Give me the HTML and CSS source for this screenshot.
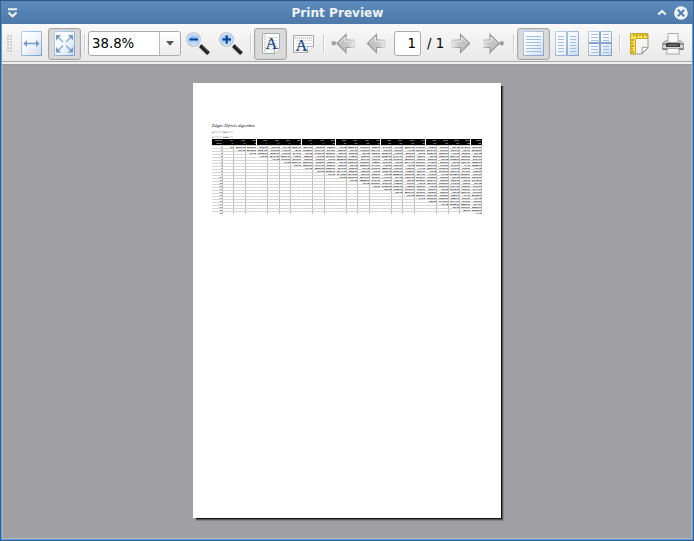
FILE: index.html
```html
<!DOCTYPE html>
<html lang="en">
<head>
<meta charset="utf-8">
<title>Print Preview</title>
<link rel="stylesheet" href="styles.css">
</head>
<body>
<svg width="0" height="0" class="defs">
  <defs>
    <linearGradient id="paper" x1="0" y1="0" x2="1" y2="1"><stop offset="0" stop-color="#fff"/><stop offset=".5" stop-color="#f3f7fb"/><stop offset="1" stop-color="#cbdaee"/></linearGradient>
    <linearGradient id="edge" x1="0" y1="0" x2="1" y2="1"><stop offset="0" stop-color="#bdcfe6"/><stop offset="1" stop-color="#7d9fcb"/></linearGradient>
    <linearGradient id="arrow" x1="0" y1="0" x2="1" y2="0"><stop offset="0" stop-color="#bcbcbc"/><stop offset=".6" stop-color="#c8c8c8"/><stop offset="1" stop-color="#c8c8c8" stop-opacity=".15"/></linearGradient>
    <linearGradient id="arrowline" gradientUnits="userSpaceOnUse" x1="0" y1="0" x2="22" y2="0"><stop offset="0" stop-color="#929292"/><stop offset=".55" stop-color="#9c9c9c"/><stop offset="1" stop-color="#aaa" stop-opacity=".05"/></linearGradient>
    <radialGradient id="lens" cx=".5" cy=".8" r=".8"><stop offset="0" stop-color="#c5e4ff"/><stop offset=".6" stop-color="#8dbffa"/><stop offset="1" stop-color="#dcebff"/></radialGradient>
    <g id="glass">
      <path d="M14 14l8.500 8" stroke="#999" stroke-width="4.2"/>
      <path d="M14.500 13.500l8 7.800" stroke="#151515" stroke-width="3.3"/>
      <path d="M16 14l6 6" stroke="#777" stroke-width=".8"/>
      <circle cx="7.500" cy="7.500" r="6.700" fill="url(#lens)" stroke="#b5b9c0" stroke-width="1.2"/>
      <circle cx="7.500" cy="7.500" r="5.700" fill="none" stroke="#e6f1ff"/>
    </g>
    <g id="back">
      <path d="M1.500 10.500L10.500 1.500V7H19V14.500H10.500V19.500Z" fill="url(#arrow)" stroke="url(#arrowline)" stroke-width="1.2"/>
      <path d="M3.500 10L9.500 4V8.200H15" fill="none" stroke="#eee"/>
    </g>
  </defs>
</svg>
<div class="window">
  <header class="titlebar">
    <svg class="menu" width="11" height="10"><path d="M1 1.200h9M1.500 4.500L5.500 8.200l4-3.700" fill="none" stroke="#eef3f8" stroke-width="2.1"/></svg>
    <h1>Print Preview</h1>
    <svg class="shade" width="10" height="7"><path d="M1.300 5.600L5 2l3.700 3.600" fill="none" stroke="#eef3f8" stroke-width="2.1"/></svg>
    <svg class="close" width="14" height="14"><circle cx="7" cy="7" r="6.8" fill="#f0f5fa"/><path d="M3.800 3.800l6.400 6.400M10.200 3.800l-6.400 6.400" stroke="#5280b1" stroke-width="2.1"/></svg>
  </header>
  <div class="toolbar">
    <span class="grip"></span>
    <button class="tool"><svg width="21" height="25"><path d="M.5 .5h20v24H.5z" fill="url(#paper)" stroke="url(#edge)"/><path d="M3 12.500h15" stroke="#739ac8" stroke-width="1.5"/><path d="M6 9L2.500 12.500L6 16zM15 9l3.500 3.500L15 16z" fill="#739ac8"/></svg></button>
    <button class="tool on"><svg width="21" height="25"><path d="M.5 .5h20v24H.5z" fill="url(#paper)" stroke="url(#edge)"/><path d="M4 6l5 5M17 6l-5 5M4 19.500l5-5M17 19.500l-5-5" stroke="#86a8d0" stroke-width="1.3"/><path d="M2 4h5l-5 5.500zM19 4h-5l5 5.500zM2 21.500h5l-5-5.500zM19 21.500h-5l5-5.500z" fill="#739ac8"/></svg></button>
    <i class="sep"></i>
    <div class="combo"><span>38.8%</span><b><svg width="8" height="5"><path d="M0 0h8L4 4.700z" fill="#555"/></svg></b></div>
    <button class="tool"><svg width="24" height="24"><use href="#glass"/><path d="M3.500 7.500h8.500" stroke="#0b3d91" stroke-width="2"/></svg></button>
    <button class="tool"><svg width="24" height="24"><use href="#glass"/><path d="M3.500 7.500h8.500M7.700 3.300v8.500" stroke="#0b3d91" stroke-width="2"/></svg></button>
    <i class="sep"></i>
    <button class="tool on"><svg width="18" height="22"><path d="M.5 .5h17v15l-5 5H.5z" fill="#fbfbfb" stroke="#a8a8a8"/><path d="M3 2v18" stroke="#999" stroke-dasharray="1 1"/><path d="M5 4.500h11M5 7.500h11M5 10.500h11M5 13.500h11M5 16.500h7" stroke="#dcdcdc"/><path d="M12.500 20.500v-5H17.500" fill="#fff" stroke="#aaa"/><text x="9.500" y="15.500" class="letter">A</text></svg></button>
    <button class="tool"><svg width="21" height="20"><path d="M.5 1.500h20v11l-6 6H.5z" fill="#fbfbfb" stroke="#a8a8a8"/><path d="M2 4h17" stroke="#999" stroke-dasharray="1 1"/><path d="M3 6.500h16M3 9.500h16M3 12.500h16M3 15.500h11" stroke="#dcdcdc"/><path d="M14.500 18.500v-6H20.500" fill="#fff" stroke="#aaa"/><text x="8.500" y="17" class="letter">A</text></svg></button>
    <i class="sep"></i>
    <button class="tool"><svg width="25" height="22"><g transform="translate(4.500 0)"><use href="#back"/></g><circle cx="2.800" cy="10.200" r="2.3" fill="#a0a0a0"/></svg></button>
    <button class="tool"><svg width="21" height="22"><use href="#back"/></svg></button>
    <div class="page-number">1</div><span class="page-total">/ 1</span>
    <button class="tool"><svg width="19" height="22"><g transform="translate(20 0) scale(-1 1)"><use href="#back"/></g></svg></button>
    <button class="tool"><svg width="21" height="22"><g transform="translate(17.500 0) scale(-1 1)"><use href="#back"/></g><circle cx="18.700" cy="10.200" r="2.3" fill="#a0a0a0"/></svg></button>
    <i class="sep"></i>
    <button class="tool on"><svg width="21" height="25"><path d="M.5 .5h20v24H.5z" fill="url(#paper)" stroke="url(#edge)"/><path d="M3 5.500h15M3 8.500h15M3 11.500h15M3 14.500h15M3 17.500h15M3 20.500h15" stroke="#a3bcdb"/></svg></button>
    <button class="tool"><svg width="24" height="25"><path d="M.5 .5h11v24H.5zM12.500 .5h11v24h-11z" fill="url(#paper)" stroke="url(#edge)"/><path d="M3 5.500h6M3 8.500h6M3 11.500h6M3 14.500h6M3 17.500h6M3 20.500h6M15 5.500h6M15 8.500h6M15 11.500h6M15 14.500h6M15 17.500h6M15 20.500h6" stroke="#a3bcdb"/></svg></button>
    <button class="tool"><svg width="24" height="25"><path d="M.5 .5h23v24H.5z" fill="url(#paper)" stroke="url(#edge)"/><path d="M12 1v23M1 12h22" stroke="#84a5cf" stroke-width="2"/><path d="M3 3.500h7M3 6.500h7M3 9.500h7M15 3.500h6M15 6.500h6M15 9.500h6M3 15.500h7M3 18.500h7M3 21.500h7M15 15.500h6M15 18.500h6M15 21.500h6" stroke="#a3bcdb"/></svg></button>
    <i class="sep"></i>
    <button class="tool"><svg width="19" height="22"><path d="M1 1h17v14l-6 6H1z" fill="#f6f6f4" stroke="#999"/><path d="M.5 .5h17v5H5.500v15.500h-5z" fill="#ffe14a" stroke="#c4a93a"/><path d="M4 1v2M7 1v3M10 1v2M13 1v3M16 1v2M1 7h3M1 10h2M1 13h3M1 16h2M1 19h3" stroke="#8c7200"/><path d="M11.500 20.500l1.200-6.500 5.300 .800z" fill="#fff" stroke="#999"/></svg></button>
    <button class="tool"><svg width="22" height="22"><path d="M3 8h16l2.500 2.500v6H.5v-6z" fill="#d6d6d6" stroke="#959595"/><path d="M6 .5h10v9H6z" fill="#fafafa" stroke="#aaa"/><path d="M4 10h14v4H4z" fill="#3e3e3e"/><path d="M6 12h10" stroke="#888"/><path d="M1 11h3M18 11h3" stroke="#555"/><path d="M1 16h20" stroke="#555"/><path d="M5.500 15.500h11l1.200 5.500H4.300z" fill="#f8f8f8" stroke="#aaa"/></svg></button>
  </div>
  <main class="canvas">
    <article class="sheet">
      <h2>Edgar–Elfricis algorithm</h2>
      <dl><dt>N</dt><dd>100</dd><dt>n</dt><dd>0.050</dd></dl>
      <div class="grid" id="grid"></div>
    </article>
  </main>
</div>
<script src="table.js"></script>
</body>
</html>
```

FILE: styles.css
```css
* { box-sizing: border-box; }
body { margin: 0; overflow: hidden; font-family: "DejaVu Sans", sans-serif; }
.defs { position: absolute; }
.window {
  display: flex; flex-direction: column;
  width: 694px; height: 541px;
  border: 1px solid #36618f; border-top-color: #31557f;
  background: #5b9be0; padding: 0 1px 1px;
}
.titlebar {
  display: flex; align-items: center;
  height: 23px; margin: 0 -1px; padding: 0 5px 1px 6px;
  background: linear-gradient(#5b8abb, #4d79a9);
  border-top: 1px solid #4f86c1;
}
.titlebar h1 {
  flex: 1; margin: 0; text-align: center;
  font: bold 12.1px/20px "DejaVu Sans", sans-serif; color: #eef2f6;
}
.shade { margin-right: 7px; }
.toolbar {
  display: flex; align-items: center; flex: none;
  height: 40px; padding: 0 0 1px;
  background: linear-gradient(#f9f9f9, #e9e9e9 37px, #a9a9a9 37px, #a9a9a9 38px, #efefef 38px);
}
.grip {
  width: 5px; height: 17px; margin: 0 3px 0 5px; flex: none;
  background: radial-gradient(circle at 1px 1px, #ccc 0.8px, transparent 1px) 0 0 / 3px 3px;
}
.tool {
  display: flex; align-items: center; justify-content: center; flex: none;
  width: 33px; height: 32px; padding: 0; margin: 0;
  border: 1px solid transparent; border-radius: 3px; background: none;
}
.tool svg { flex: none; }
.on { background: #dadada; border-color: #a9a9a9; box-shadow: inset 0 0 0 1px #d0d0d0; }
.sep { width: 7px; height: 19px; flex: none; background: linear-gradient(90deg, transparent 3px, #cfcfcf 3px, #cfcfcf 4px, #fff 4px, #fff 5px, transparent 5px); }
.combo, .page-number {
  height: 25px; flex: none; background: #fff;
  border: 1px solid #aaa; border-radius: 3px; font-size: 13.3px; line-height: 24px;
}
.combo { display: flex; width: 93px; }
.combo span { flex: 1; padding-left: 3px; }
.combo b { display: flex; align-items: center; justify-content: center; width: 21px; border-left: 1px solid #bbb; background: linear-gradient(#fff, #ececec); border-radius: 0 3px 3px 0; }
.page-number { width: 27px; margin-left: 1px; padding-right: 4px; text-align: right; }
.page-total { width: 23px; padding-left: 6px; flex: none; font-size: 13.3px; white-space: nowrap; }
.letter { font: 16.5px "Liberation Serif", serif; fill: #114488; stroke: #114488; stroke-width: .2px; text-anchor: middle; }
.canvas { flex: 1; background: #a09fa3; border: 1px solid #b5b5b7; border-top-color: #99989c; padding: 18px 0 0 190px; }
.sheet {
  width: 308px; height: 435px; background: #fff; padding: 40px 0 0 19px;
  box-shadow: 1px 1px 0 #111, 2px 2px 0 #555, 3px 3px 0 #888;
  clip-path: polygon(0 0, 308px 0, 308px 3px, 311px 3px, 311px 438px, 3px 438px, 3px 435px, 0 435px);
}
.sheet h2 { margin: 0; font: italic 4.2px/6px "Liberation Serif", serif; color: #000; white-space: nowrap; height: 8px; }
.sheet dl { display: grid; grid-template-columns: 10px 10px; gap: 1px; margin: 0; height: 8px; font: 2px/2px "Liberation Sans", sans-serif; }
.sheet dt, .sheet dd { margin: 0; height: 2px; background: #e4e4e4; }
.grid {
  display: grid; width: 270px;
  grid-template-columns: 11px 11px 12px 11px 11px 12px 11px 11px 11px 12px 11px 11px 11px 12px 11px 11px 11px 12px 11px 11px 12px 11px 11px 11px;
  grid-auto-rows: 3px; font: 2.2px/2px "Liberation Sans", sans-serif; color: #000;
}
.grid span {
  height: 3px; padding-right: 1px; text-align: right; white-space: nowrap;
  border-top: 1px solid #d6d6d6;
  background: linear-gradient(#777 1px, #bbb 1px) right top / 1px 3px no-repeat border-box;
}
.grid .group { background: none; border-right: 1px solid #fff; padding-right: 0; }
.grid .value { font-weight: bold; color: #222; }
.grid .head, .grid .head.group { background: #000; background-clip: padding-box; border-top: 0; color: #fff; line-height: 3px; }
```

FILE: table.js
```js
const grid = document.getElementById("grid");
const columns = 23;
const groupEnds = [3, 7, 10, 14, 18, 22];

function addCell(text, column, kind) {
  const cell = document.createElement("span");
  cell.textContent = text;
  cell.className = kind + (groupEnds.includes(column) ? " group" : "");
  grid.append(cell);
}

for (let c = 0; c <= columns; c++) addCell(c ? c * 50 : "Interval", c, "head");
for (let c = 0; c <= columns; c++) addCell(c ? c : "Order", c, "head");

for (let r = 0; r < columns; r++) {
  addCell(r, 0, "label");
  for (let c = 1; c <= columns; c++) {
    if (c <= r) {
      addCell("", c, "empty");
      continue;
    }
    const seed = (r + 3) * 7919 * (c + 5);
    const size = [9000, 90000, 700, 9000, 90000][(r * 3 + c * 2) % 5];
    addCell(c < 2 ? "50" : (seed % size + size / 9).toFixed(2), c, "value");
  }
}
```
